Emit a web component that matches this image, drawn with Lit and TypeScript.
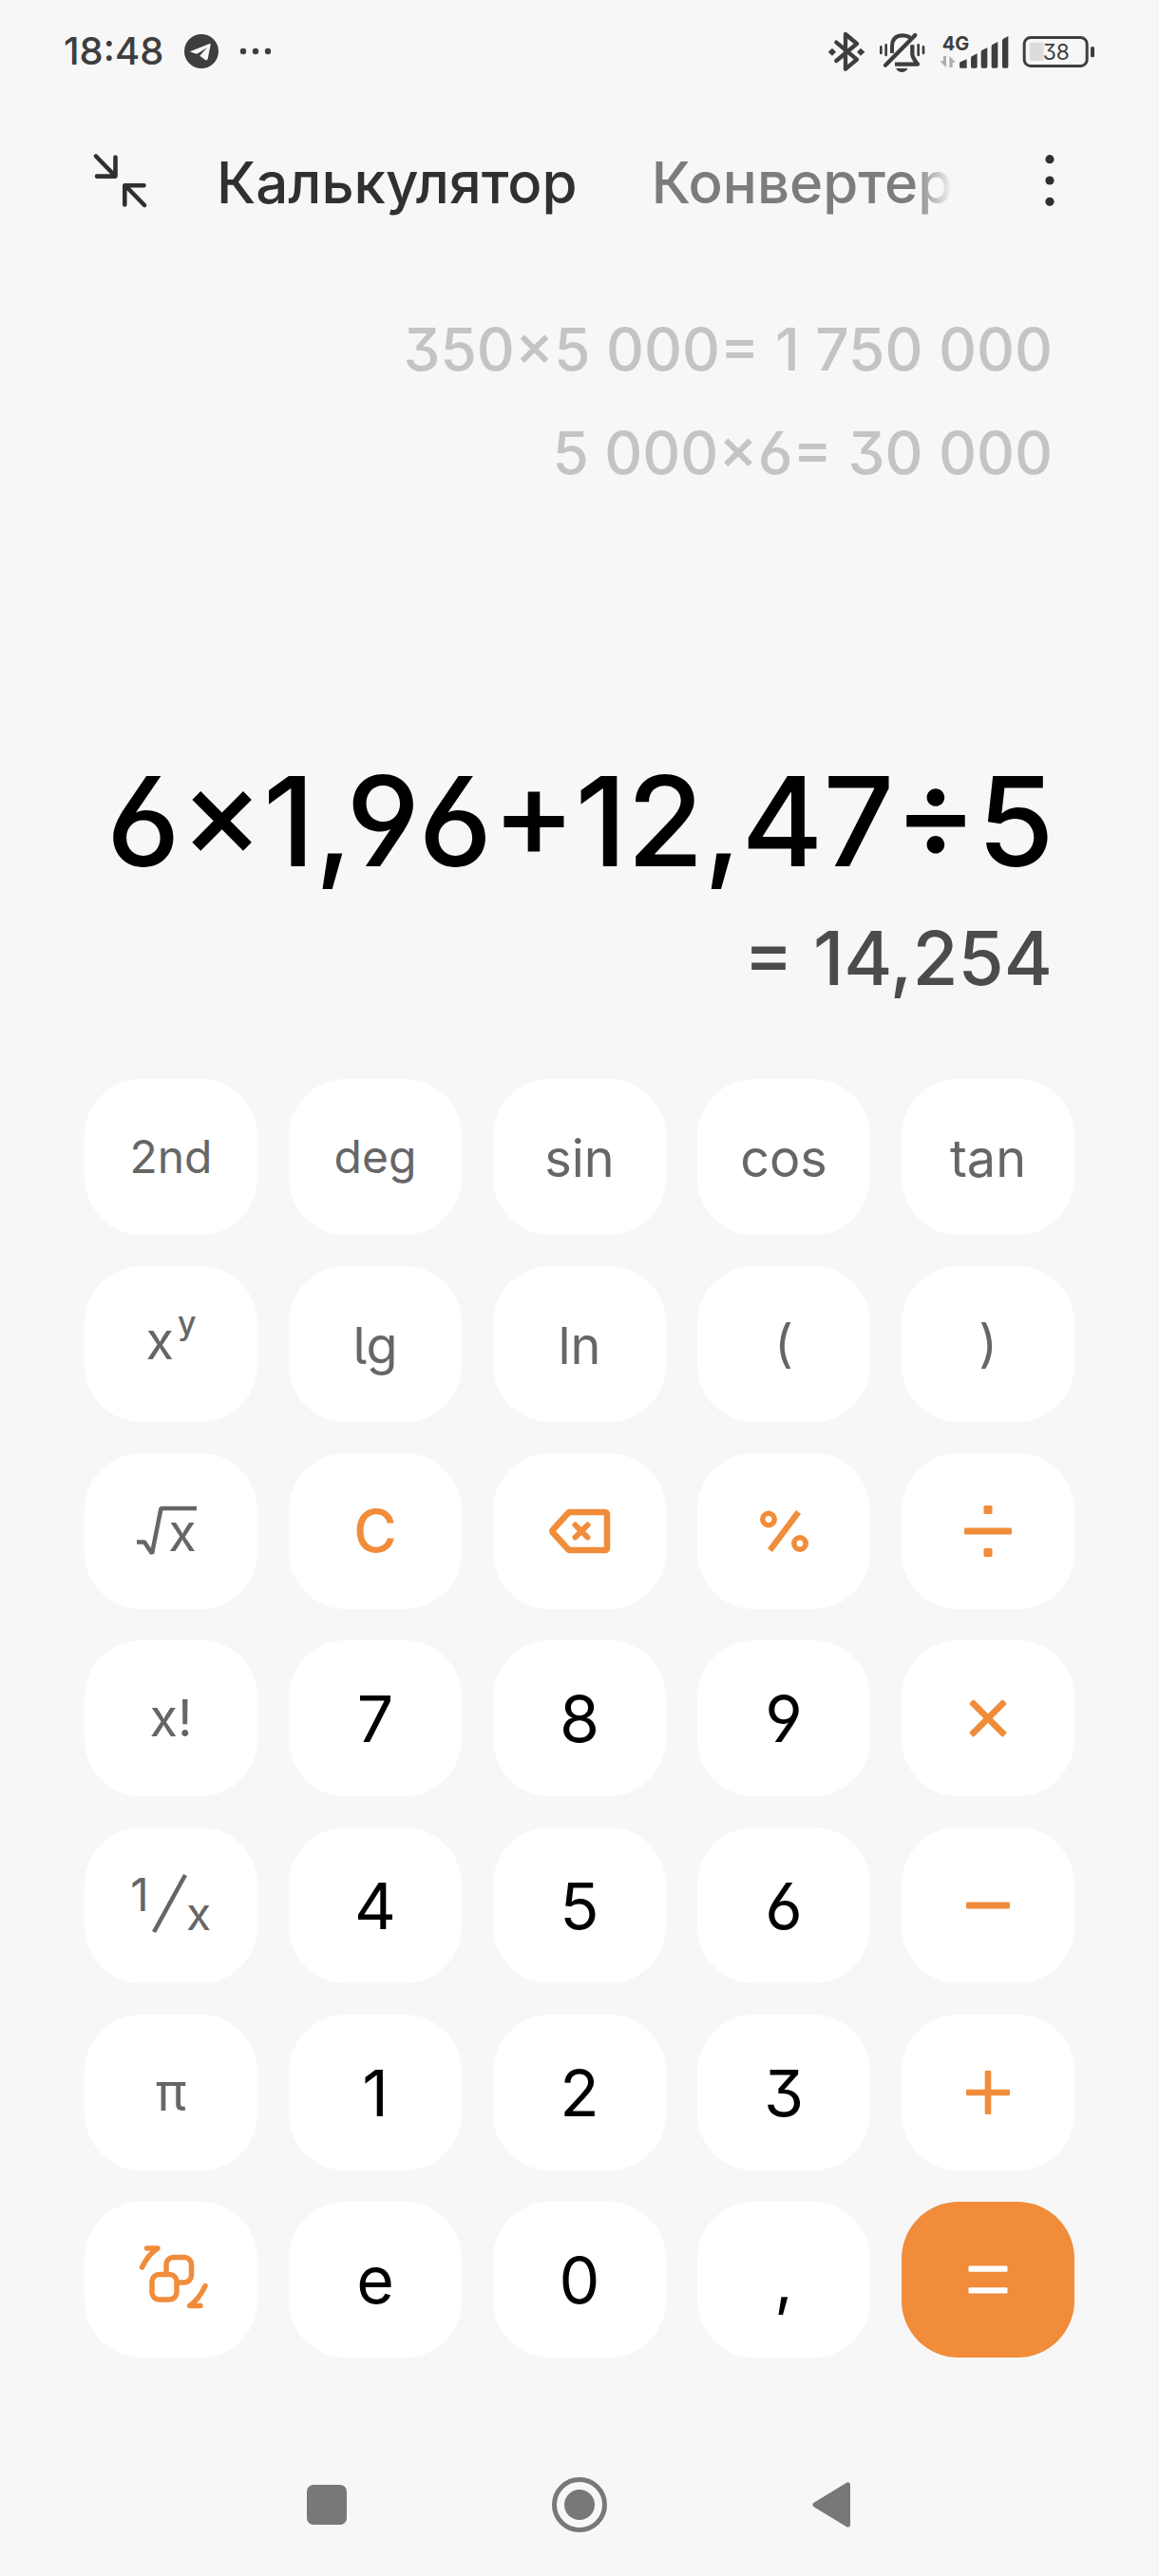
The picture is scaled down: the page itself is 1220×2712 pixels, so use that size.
import { LitElement, html, svg, css, nothing, type TemplateResult } from "lit";
import { customElement, property } from "lit/decorators.js";
import { classMap } from "lit/directives/class-map.js";

type Tone = "func" | "small" | "symbol" | "digit" | "accent" | "equals";

interface Key {
  name: string;
  tone: Tone;
  text?: string;
  sup?: string;
  icon?: TemplateResult;
}

const glyph = (width: number, height: number, body: TemplateResult) => html`
  <svg width=${width} height=${height} viewBox="0 0 ${width} ${height}" fill="none" stroke="currentColor" aria-hidden="true">
    ${body}
  </svg>
`;

const rootIcon = glyph(96, 72, svg`
  <path d="M12 47.5h8l8 12L37.5 12H75" stroke-width="4.5" stroke-linejoin="bevel" />
  <text class="letter" x="60" y="57" text-anchor="middle">x</text>
`);

const inverseIcon = glyph(96, 72, svg`
  <text class="numerator" x="15" y="42" text-anchor="middle">1</text>
  <path d="M63 4L30 64" stroke-width="4.5" />
  <text class="numerator" x="77" y="62" text-anchor="middle">x</text>
`);

const backspaceIcon = glyph(66, 48, svg`
  <path d="M23 4h37a2 2 0 0 1 2 2v36a2 2 0 0 1-2 2H23a3 3 0 0 1-2-1L5 25.500a2 2 0 0 1 0-3L21 5a3 3 0 0 1 2-1z" stroke-width="6.500" stroke-linejoin="round" />
  <path d="M28.500 17.500l13 13M41.500 17.500l-13 13" stroke-width="6" stroke-linecap="round" />
`);

const percentIcon = glyph(54, 48, svg`
  <circle cx="11" cy="11.500" r="6.200" stroke-width="5.600" />
  <circle cx="44" cy="37" r="6.200" stroke-width="5.600" />
  <path d="M42.500 3.800L12.500 44.200" stroke-width="6.400" />
`);

const divideIcon = glyph(54, 54, svg`
  <g fill="currentColor" stroke="none">
    <rect x="2" y="23.500" width="50" height="7" rx="1.500" />
    <rect x="22.500" y="0" width="9" height="9" rx="1.500" />
    <rect x="22.500" y="45" width="9" height="9" rx="1.500" />
  </g>
`);

const timesIcon = glyph(48, 48, svg`
  <g fill="currentColor" stroke="none">
    <rect x="-1" y="20.600" width="50" height="6.800" rx="1.500" transform="rotate(45 24 24)" />
    <rect x="-1" y="20.600" width="50" height="6.800" rx="1.500" transform="rotate(-45 24 24)" />
  </g>
`);

const minusIcon = glyph(48, 48, svg`
  <rect x="1" y="20.500" width="46" height="7" rx="1.500" fill="currentColor" stroke="none" />
`);

const plusIcon = glyph(48, 48, svg`
  <g fill="currentColor" stroke="none">
    <rect x="1" y="20.700" width="46" height="6.600" rx="1.200" />
    <rect x="20.700" y="1" width="6.600" height="46" rx="1.200" />
  </g>
`);

const equalsIcon = glyph(48, 48, svg`
  <g fill="currentColor" stroke="none">
    <rect x="3.500" y="9.500" width="41" height="6.200" rx="1" />
    <rect x="3.500" y="32.300" width="41" height="6.200" rx="1" />
  </g>
`);

const switchIcon = glyph(76, 70, svg`
  <g stroke-width="5.500" stroke-linejoin="round">
    <rect x="18" y="29.500" width="26" height="26.400" rx="7.500" />
    <path d="M33 29.500V19a7.500 7.500 0 0 1 7.500-7.500H52a7.500 7.500 0 0 1 7.500 7.500V30.500a7.500 7.500 0 0 1-7.500 7.500h-8" />
    <path d="M12.500 2H24C16.500 7 11.500 13.500 7.500 22" stroke-linecap="round" />
    <path d="M69 62.500H57.500C65 57.500 70 50.500 74 41.500" stroke-linecap="round" />
  </g>
`);

const KEYS: Key[] = [
  { name: "2nd", tone: "small", text: "2nd" },
  { name: "deg", tone: "small", text: "deg" },
  { name: "sin", tone: "func", text: "sin" },
  { name: "cos", tone: "func", text: "cos" },
  { name: "tan", tone: "func", text: "tan" },
  { name: "x в степени y", tone: "symbol", text: "x", sup: "y" },
  { name: "lg", tone: "func", text: "lg" },
  { name: "ln", tone: "func", text: "ln" },
  { name: "(", tone: "symbol", text: "(" },
  { name: ")", tone: "symbol", text: ")" },
  { name: "Квадратный корень", tone: "symbol", icon: rootIcon },
  { name: "Сброс", tone: "accent", text: "C" },
  { name: "Удалить", tone: "accent", icon: backspaceIcon },
  { name: "Процент", tone: "accent", icon: percentIcon },
  { name: "Разделить", tone: "accent", icon: divideIcon },
  { name: "Факториал", tone: "symbol", text: "x!" },
  { name: "7", tone: "digit", text: "7" },
  { name: "8", tone: "digit", text: "8" },
  { name: "9", tone: "digit", text: "9" },
  { name: "Умножить", tone: "accent", icon: timesIcon },
  { name: "Обратное число", tone: "symbol", icon: inverseIcon },
  { name: "4", tone: "digit", text: "4" },
  { name: "5", tone: "digit", text: "5" },
  { name: "6", tone: "digit", text: "6" },
  { name: "Вычесть", tone: "accent", icon: minusIcon },
  { name: "Пи", tone: "symbol", text: "π" },
  { name: "1", tone: "digit", text: "1" },
  { name: "2", tone: "digit", text: "2" },
  { name: "3", tone: "digit", text: "3" },
  { name: "Сложить", tone: "accent", icon: plusIcon },
  { name: "Сменить раскладку", tone: "accent", icon: switchIcon },
  { name: "e", tone: "digit", text: "e" },
  { name: "0", tone: "digit", text: "0" },
  { name: ",", tone: "digit", text: "," },
  { name: "Равно", tone: "equals", icon: equalsIcon },
];

@customElement("status-bar")
export class StatusBar extends LitElement {
  static styles = css`
    :host {
      display: flex;
      align-items: center;
      justify-content: space-between;
      box-sizing: border-box;
      height: 108px;
      padding: 0 67px;
      color: #3e3e3e;
    }
    .side {
      display: flex;
      align-items: center;
      gap: 14px;
    }
    .left {
      gap: 22px;
    }
    time {
      font-size: 40px;
      line-height: 44px;
      font-weight: 500;
    }
    svg {
      display: block;
      overflow: visible;
    }
    .network {
      font-size: 60px;
      font-weight: 700;
    }
    .level {
      font-size: 68px;
      font-weight: 400;
    }
  `;

  render() {
    return html`
      <div class="side left">
        <time>18:48</time>
        <svg width="36" height="36" viewBox="583 106 108 108" role="img" aria-label="Telegram">
          <circle cx="637" cy="160" r="54" fill="currentColor" />
          <path d="M601 161L663 136Q667 135 666 140L657 184Q655 191 649 187L632 174L655 148Q628 166 622 168Q611 167 601 161Z" fill="#f7f7f7" />
        </svg>
        <svg width="34" height="12" viewBox="0 0 34 12" fill="currentColor" aria-hidden="true">
          <circle cx="4" cy="6" r="3.200" /><circle cx="17" cy="6" r="3.200" /><circle cx="30" cy="6" r="3.200" />
        </svg>
      </div>
      <div class="side">
        <svg width="40" height="43" viewBox="150 95 120 129" fill="none" stroke="currentColor" role="img" aria-label="Bluetooth">
          <path d="M178 130L243 184L207 214V104L243 134L178 188" stroke-width="13" stroke-linejoin="round" stroke-linecap="round" />
          <path d="M152 160l13-12l12 12l-12 12zM243 160l12-12l13 12l-13 12z" fill="currentColor" stroke="none" />
        </svg>
        <svg width="50" height="43" viewBox="315 95 150 129" fill="none" stroke="currentColor" role="img" aria-label="Без звука">
          <path d="M357 164V142Q358 109 389 108Q405 108 414 115" stroke-width="12" />
          <path d="M421 138V168Q423 180 438 199H366" stroke-width="13" stroke-linejoin="round" />
          <path d="M430 107L336 202" stroke-width="13" stroke-linecap="round" />
          <path d="M322 144v20M338 138v32M440 138v32M456 144v20" stroke-width="8" stroke-linecap="round" />
          <path d="M369 212h38Q400 224 388 224T369 212z" fill="currentColor" stroke="none" />
        </svg>
        <svg width="73" height="37" viewBox="507 105 219 111" fill="currentColor" role="img" aria-label="4G">
          <text class="network" x="515" y="156">4G</text>
          <path d="M519 174h9v36l-20-20h11zM538 210v-36l20 20h-10v16z" fill="#adadad" />
          <path d="M570 198q0-4 4-6l19-8v28h-19q-4 0-4-4zM606 180q0-4 4-6l16-8v42q0 4-4 4h-12q-4 0-4-4zM638 161q0-4 4-6l16-8v61q0 4-4 4h-12q-4 0-4-4zM671 143q0-4 4-6l16-8v79q0 4-4 4h-12q-4 0-4-4zM705 125q0-4 4-6l15-8v97q0 4-4 4h-11q-4 0-4-4z" />
        </svg>
        <svg width="77" height="35" viewBox="768 108 231 105" fill="currentColor" role="img" aria-label="Батарея 38%">
          <rect x="774.500" y="115.500" width="198" height="90" rx="20" fill="none" stroke="currentColor" stroke-width="9" />
          <path d="M799 131h37v58h-37q-8 0-8-8v-42q0-8 8-8z" fill="#dcdcdc" />
          <rect x="984" y="144" width="12" height="34" rx="5" />
          <text class="level" x="875" y="186" text-anchor="middle">38</text>
        </svg>
      </div>
    `;
  }
}

@customElement("calc-key")
export class CalcKey extends LitElement {
  @property({ attribute: false }) data!: Key;

  static styles = css`
    :host {
      display: grid;
    }
    button {
      display: flex;
      align-items: center;
      justify-content: center;
      min-height: 164px;
      margin: 0;
      padding: 0;
      border: 0;
      border-radius: 60px;
      background: #fff;
      color: #666;
      font: inherit;
      font-size: 54px;
      line-height: 60px;
      font-weight: 400;
    }
    .func {
      padding-top: 4px;
    }
    .small {
      font-size: 48px;
    }
    .tailed {
      font-feature-settings: "cv05";
    }
    .digit {
      color: #000;
      font-size: 68px;
      line-height: 80px;
    }
    .accent {
      color: #f08c3a;
      font-size: 62px;
      font-weight: 500;
    }
    .equals {
      background: #f08c3a;
      color: #fff;
    }
    .power {
      display: flex;
      gap: 4px;
      align-items: flex-end;
      height: 66px;
      padding-bottom: 12px;
    }
    sup {
      align-self: flex-start;
      font-size: 34px;
      line-height: 34px;
      font-weight: 500;
    }
    svg {
      display: block;
      overflow: visible;
    }
    svg text {
      fill: currentColor;
      stroke: none;
    }
    .letter {
      font-size: 54px;
    }
    .numerator {
      font-size: 48px;
    }
  `;

  render() {
    const { name, tone, text, sup, icon } = this.data;
    const classes = { [tone]: true, tailed: text === "lg" };
    return html`
      <button type="button" class=${classMap(classes)} aria-label=${name === text ? nothing : name}>
        ${icon ?? (sup ? html`<span class="power"><span>${text}</span><sup>${sup}</sup></span>` : text)}
      </button>
    `;
  }
}

@customElement("app-root")
export class AppRoot extends LitElement {
  static styles = css`
    :host {
      display: flex;
      flex-direction: column;
      min-height: 100vh;
      background: #f7f7f7;
      font-family: Inter, Roboto, "Noto Sans", sans-serif;
      font-feature-settings: "cv03", "cv04", "cv09";
    }
    button {
      margin: 0;
      padding: 0;
      border: 0;
      background: none;
      color: inherit;
      font: inherit;
    }
    svg {
      display: block;
    }
    header {
      display: flex;
      align-items: center;
      gap: 72px;
      height: 164px;
      padding: 0 85px 0 96px;
      color: #303030;
    }
    .tool {
      flex: none;
    }
    .tabs {
      display: flex;
      flex: 1;
      gap: 78px;
      min-width: 0;
      padding-top: 4px;
      overflow: hidden;
      font-size: 60px;
      line-height: 80px;
      font-weight: 500;
      white-space: nowrap;
      mask-image: linear-gradient(to left, transparent, #000 42px);
    }
    .tabs .idle {
      color: #7c7c7c;
    }
    main {
      display: flex;
      flex: 1;
      flex-direction: column;
    }
    .display {
      display: flex;
      flex: 1;
      flex-direction: column;
      padding: 41px 112px 77px;
      text-align: right;
    }
    .history {
      margin: 0 0 auto;
      padding: 0;
      list-style: none;
      color: #c4c4c4;
      font-size: 62px;
      line-height: 109px;
      font-weight: 500;
    }
    output {
      display: block;
    }
    .expression {
      color: #000;
      font-size: 131px;
      line-height: 160px;
      font-weight: 500;
      white-space: nowrap;
    }
    .result {
      margin-top: 14px;
      color: #4b4b4b;
      font-size: 78px;
      line-height: 100px;
      font-weight: 500;
    }
    .keypad {
      display: grid;
      grid-template-columns: repeat(5, 1fr);
      gap: 33px;
      padding: 0 89px 80px;
    }
    .system {
      display: grid;
      grid-template-columns: repeat(3, 266px);
      justify-content: center;
      height: 150px;
      color: #787878;
    }
    .system button {
      display: grid;
      place-items: center;
    }
  `;

  private history = ["350×5 000= 1 750 000", "5 000×6= 30 000"];

  render() {
    return html`
      <status-bar></status-bar>
      <header>
        <button class="tool" type="button" aria-label="Свернуть в окно">
          <svg width="60" height="60" viewBox="96 160 60 60" fill="none" stroke="currentColor" stroke-width="4.600" stroke-linecap="round" stroke-linejoin="round" aria-hidden="true">
            <path d="M101 164.500L121 185M121.500 165.500V185.600H102M152 216L132 195.500M131.300 215.500V195.200H151.500" />
          </svg>
        </button>
        <div class="tabs" role="tablist">
          <button type="button" role="tab" aria-selected="true">Калькулятор</button>
          <button type="button" role="tab" aria-selected="false" class="idle">Конвертер</button>
        </div>
        <button class="tool" type="button" aria-label="Меню">
          <svg width="60" height="60" viewBox="0 0 60 60" fill="currentColor" aria-hidden="true">
            <circle cx="30" cy="7.700" r="4.600" /><circle cx="30" cy="30" r="4.600" /><circle cx="30" cy="52.300" r="4.600" />
          </svg>
        </button>
      </header>
      <main>
        <section class="display">
          <ul class="history">
            ${this.history.map((line) => html`<li>${line}</li>`)}
          </ul>
          <output class="expression">6×1,96+12,47÷5</output>
          <output class="result">= 14,254</output>
        </section>
        <section class="keypad">
          ${KEYS.map((key) => html`<calc-key .data=${key}></calc-key>`)}
        </section>
      </main>
      <nav class="system">
        <button type="button" aria-label="Недавние">
          <svg width="44" height="42" viewBox="0 0 44 42" aria-hidden="true"><rect x="1" width="42" height="42" rx="7" fill="currentColor" /></svg>
        </button>
        <button type="button" aria-label="Домой">
          <svg width="60" height="60" viewBox="0 0 60 60" aria-hidden="true">
            <circle cx="30" cy="30" r="26.500" fill="none" stroke="currentColor" stroke-width="5" />
            <circle cx="30" cy="30" r="16" fill="currentColor" />
          </svg>
        </button>
        <button type="button" aria-label="Назад">
          <svg width="42" height="50" viewBox="0 0 42 50" aria-hidden="true">
            <path d="M3 25L37.500 4V46Z" fill="currentColor" stroke="currentColor" stroke-width="5" stroke-linejoin="round" />
          </svg>
        </button>
      </nav>
    `;
  }
}
